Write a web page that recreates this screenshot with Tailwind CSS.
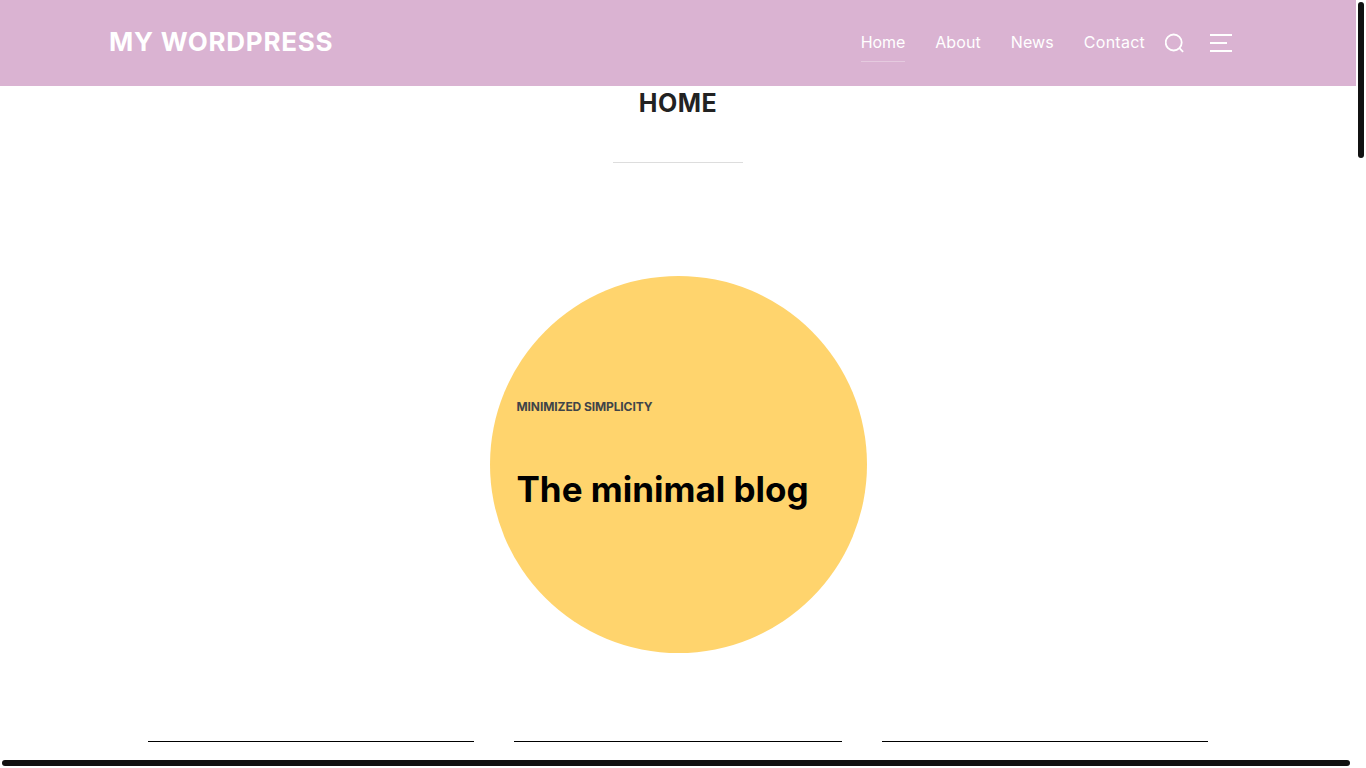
<!DOCTYPE html>
<html lang="en">
<head>
    <meta charset="UTF-8">
    <title>My WordPress</title>
    <script src="https://cdn.jsdelivr.net/npm/@tailwindcss/browser@4"></script>
</head>
<body class="relative h-screen overflow-hidden bg-white font-['Inter',sans-serif]">
    <div class="w-[1356px]">
        <!-- Header -->
        <header class="h-[86px] bg-[#dab3d2] flex items-center pl-[109px] text-white">
            <a class="pb-0.5 text-[26px] font-bold tracking-[0.75px] leading-none">MY WORDPRESS</a>
            <nav class="ml-auto pb-0.5 flex items-center gap-[30px] text-base">
                <a class="relative tracking-[-0.1px]">Home<span class="absolute left-0 right-0 top-[31px] h-px bg-white/30"></span></a>
                <a class="tracking-[0.1px]">About</a>
                <a class="tracking-[0.1px]">News</a>
                <a class="tracking-[0.25px]">Contact</a>
            </nav>
            <svg class="ml-5 w-5 h-5" viewBox="0 0 20 20" fill="none" stroke="currentColor" stroke-width="1.8">
                <circle cx="8.7" cy="9.5" r="8"/>
                <path d="M14.5 15.2l3.6 3.6"/>
            </svg>
            <div class="ml-[25px] mr-[124px] w-[22px] flex flex-col gap-1.5">
                <span class="h-0.5 w-[22px] bg-white"></span>
                <span class="h-0.5 w-[17px] bg-white"></span>
                <span class="h-0.5 w-[22px] bg-white"></span>
            </div>
        </header>

        <!-- Page title -->
        <h1 class="mt-1.5 text-center text-[25px] tracking-[0.5px] leading-[23px] font-bold text-[#222]">HOME</h1>
        <div class="mt-[47px] mx-auto w-[130px] h-px bg-[#ddd]"></div>

        <!-- Circle -->
        <div class="mt-[113px] mx-auto w-[377px] h-[377px] rounded-full bg-[#ffd46d] flex flex-col justify-center pl-[27px] pb-5">
            <p class="text-xs leading-4 font-bold tracking-[-0.1px] text-[#3f4448]">MINIMIZED SIMPLICITY</p>
            <h2 class="mt-[52px] text-[35px] leading-[44px] font-bold text-black">The minimal blog</h2>
        </div>

        <!-- Columns -->
        <div class="mt-[88px] mx-auto w-[1060px] grid grid-cols-[326px_328px_326px] gap-10">
            <div class="border-t border-black"></div>
            <div class="border-t border-black"></div>
            <div class="border-t border-black"></div>
        </div>
    </div>

    <!-- Scrollbars -->
    <div class="absolute left-[1358px] top-0.5 w-1.5 h-[156px] rounded-full bg-[#111]"></div>
    <div class="absolute left-0.5 top-[760px] w-[1348px] h-1.5 rounded-full bg-[#111]"></div>
</body>
</html>
